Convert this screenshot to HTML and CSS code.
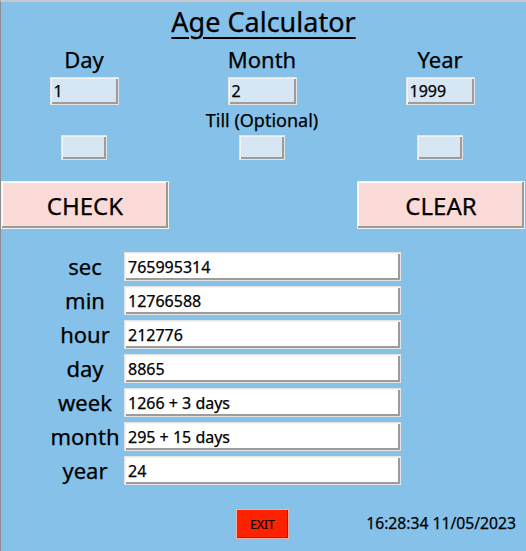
FILE: index.html
```html
<!DOCTYPE html>
<html>
<head>
<meta charset="utf-8">
<link rel="stylesheet" href="styles.css">
</head>
<body>
<div class="app">
  <h1 class="title"><span>Age Calculator</span></h1>
  <div class="dates">
    <span class="lbl">Day</span>
    <span class="lbl">Month</span>
    <span class="lbl">Year</span>
    <input class="entry date" value="1" readonly>
    <input class="entry date" value="2" readonly>
    <input class="entry date" value="1999" readonly>
    <div class="till">Till (Optional)</div>
    <input class="entry small" value="" readonly>
    <input class="entry small" value="" readonly>
    <input class="entry small" value="" readonly>
  </div>
  <div class="actions">
    <button class="btn">CHECK</button>
    <button class="btn">CLEAR</button>
  </div>
  <div class="results">
    <span class="rlbl">sec</span><input class="entry result" value="765995314" readonly>
    <span class="rlbl">min</span><input class="entry result" value="12766588" readonly>
    <span class="rlbl">hour</span><input class="entry result" value="212776" readonly>
    <span class="rlbl">day</span><input class="entry result" value="8865" readonly>
    <span class="rlbl">week</span><input class="entry result" value="1266 + 3 days" readonly>
    <span class="rlbl">month</span><input class="entry result" value="295 + 15 days" readonly>
    <span class="rlbl">year</span><input class="entry result" value="24" readonly>
  </div>
  <div class="footer">
    <button class="exit">EXIT</button>
    <span class="clock">16:28:34 11/05/2023</span>
  </div>
</div>
</body>
</html>
```
FILE: styles.css
```css
* { box-sizing: border-box; }
html, body { margin: 0; padding: 0; }
body {
  width: 526px;
  height: 551px;
  background: #85c1e9;
  font-family: "Noto Sans", "Open Sans", sans-serif;
  color: #000;
  overflow: hidden;
  -webkit-text-stroke: 0.25px #000;
}
.app {
  width: 526px;
  height: 551px;
  border-top: 2px solid #c9c9c9;
  border-left: 1px solid #8c8c8c;
  background: #85c1e9;
}
.title {
  margin: 5px 0 0;
  height: 30px;
  font-size: 27px;
  line-height: 30px;
  font-weight: 400;
  text-align: center;
}
.title span {
  text-decoration: underline;
  text-decoration-thickness: 2px;
  text-underline-offset: 5px;
}
.dates {
  margin-top: 9px;
  margin-left: -1px;
  display: grid;
  grid-template-columns: 168px 168px 168px;
  column-gap: 10px;
  row-gap: 5px;
  justify-items: center;
}
.lbl {
  font-size: 22px;
  line-height: 26px;
  height: 26px;
}
.till {
  grid-column: 1 / -1;
  font-size: 18px;
  line-height: 20px;
  height: 20px;
}
.entry {
  display: block;
  margin: 0;
  font-family: "Noto Sans", "Open Sans", sans-serif;
  color: #000;
  -webkit-text-stroke: 0.25px #000;
  border: 1px solid #e4e4e4;
  box-shadow: inset 1px 1px 0 #f4f4f4, inset -2px -2px 0 #9c9c9c;
  outline: none;
  padding: 0 0 0 3px;
}
.date {
  width: 69px;
  height: 28px;
  background: #d6e6f2;
  font-size: 16px;
}
.small {
  width: 46px;
  height: 25px;
  background: #d6e6f2;
}
.actions {
  margin-top: 21px;
  display: flex;
  justify-content: space-between;
  padding-right: 1px;
}
.btn {
  width: 168px;
  height: 48px;
  margin: 0;
  padding: 0;
  background: #fadbd8;
  border: 1px solid #f2f2f2;
  box-shadow: inset -2px -2px 0 #9a9a9a, inset 1px 1px 0 #ffffff;
  font-family: "Noto Sans", "Open Sans", sans-serif;
  font-size: 24px;
  color: #000;
  -webkit-text-stroke: 0.25px #000;
}
.results {
  margin-top: 23px;
  padding-left: 47px;
  display: grid;
  grid-template-columns: 74px 277px;
  column-gap: 2px;
  row-gap: 5px;
  align-items: center;
}
.rlbl {
  font-size: 22px;
  line-height: 29px;
  text-align: center;
  white-space: nowrap;
}
.result {
  width: 277px;
  height: 29px;
  background: #ffffff;
  font-size: 16px;
}
.footer {
  margin-top: 24px;
  display: flex;
  align-items: baseline;
  padding-left: 235px;
  padding-right: 10px;
}
.exit {
  width: 53px;
  height: 30px;
  margin: 0;
  padding: 0;
  background: #ff2200;
  border: 1px solid #f3b3a6;
  box-shadow: inset -1px -1px 0 #8a2a1a;
  font-family: "Noto Sans", "Open Sans", sans-serif;
  font-size: 12px;
  color: #000;
  -webkit-text-stroke: 0.2px #000;
}
.clock {
  margin-left: auto;
  font-size: 15.7px;
}
```
